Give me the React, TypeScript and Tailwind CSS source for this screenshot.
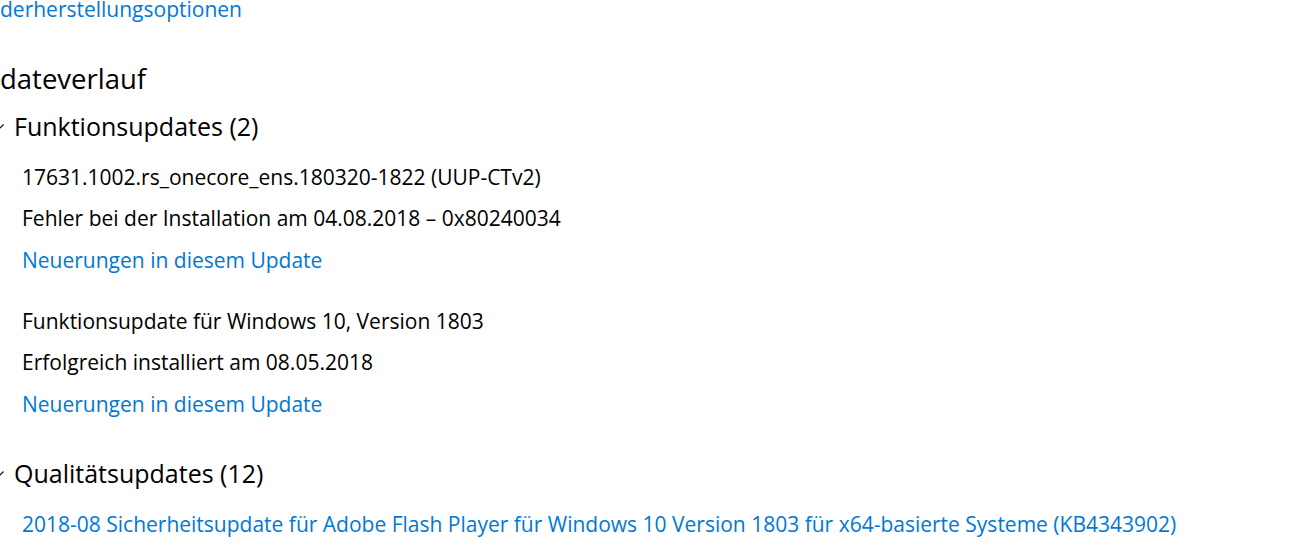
export default function App() {
  return (
    <div className="h-[554px] w-[1296px] overflow-hidden bg-white text-black font-['Open_Sans',sans-serif]">
      <a className="block h-[19px] text-[21px] leading-[19px] text-[#0078d7]">derherstellungsoptionen</a>

      <h1 className="mt-[42px] h-[36px] text-[27.5px] leading-[36px] font-normal">dateverlauf</h1>

      {/* Funktionsupdates */}
      <div className="mt-[11px] flex h-[36px] items-center">
        <svg className="-ml-[5px] mr-[10px] h-[9px] w-[9px] shrink-0" viewBox="0 0 9 9">
          <path d="M0.5 2.5 L4.5 6.5 L8.5 2.5" fill="none" stroke="#000" strokeWidth="1.1" />
        </svg>
        <span className="text-[25px] leading-[36px]">Funktionsupdates (2)</span>
      </div>

      <div className="pl-[22px] text-[21px] leading-[28px]">
        <div className="mt-[19px]">17631.1002.rs_onecore_ens.180320-1822 (UUP-CTv2)</div>
        <div className="mt-[13px]">Fehler bei der Installation am 04.08.2018 – 0x80240034</div>
        <div className="mt-[14px] text-[#0078d7]">Neuerungen in diesem Update</div>

        <div className="mt-[33px]">Funktionsupdate für Windows 10, Version 1803</div>
        <div className="mt-[13px]">Erfolgreich installiert am 08.05.2018</div>
        <div className="mt-[14px] text-[#0078d7]">Neuerungen in diesem Update</div>
      </div>

      {/* Qualitätsupdates */}
      <div className="mt-[37px] flex h-[36px] items-center">
        <svg className="-ml-[5px] mr-[10px] h-[9px] w-[9px] shrink-0" viewBox="0 0 9 9">
          <path d="M0.5 2.5 L4.5 6.5 L8.5 2.5" fill="none" stroke="#000" strokeWidth="1.1" />
        </svg>
        <span className="text-[25px] leading-[36px]">Qualitätsupdates (12)</span>
      </div>

      <div className="mt-[19px] pl-[22px] text-[21px] leading-[28px] text-[#0078d7]">
        2018-08 Sicherheitsupdate für Adobe Flash Player für Windows 10 Version 1803 für x64-basierte Systeme (KB4343902)
      </div>
    </div>
  )
}
